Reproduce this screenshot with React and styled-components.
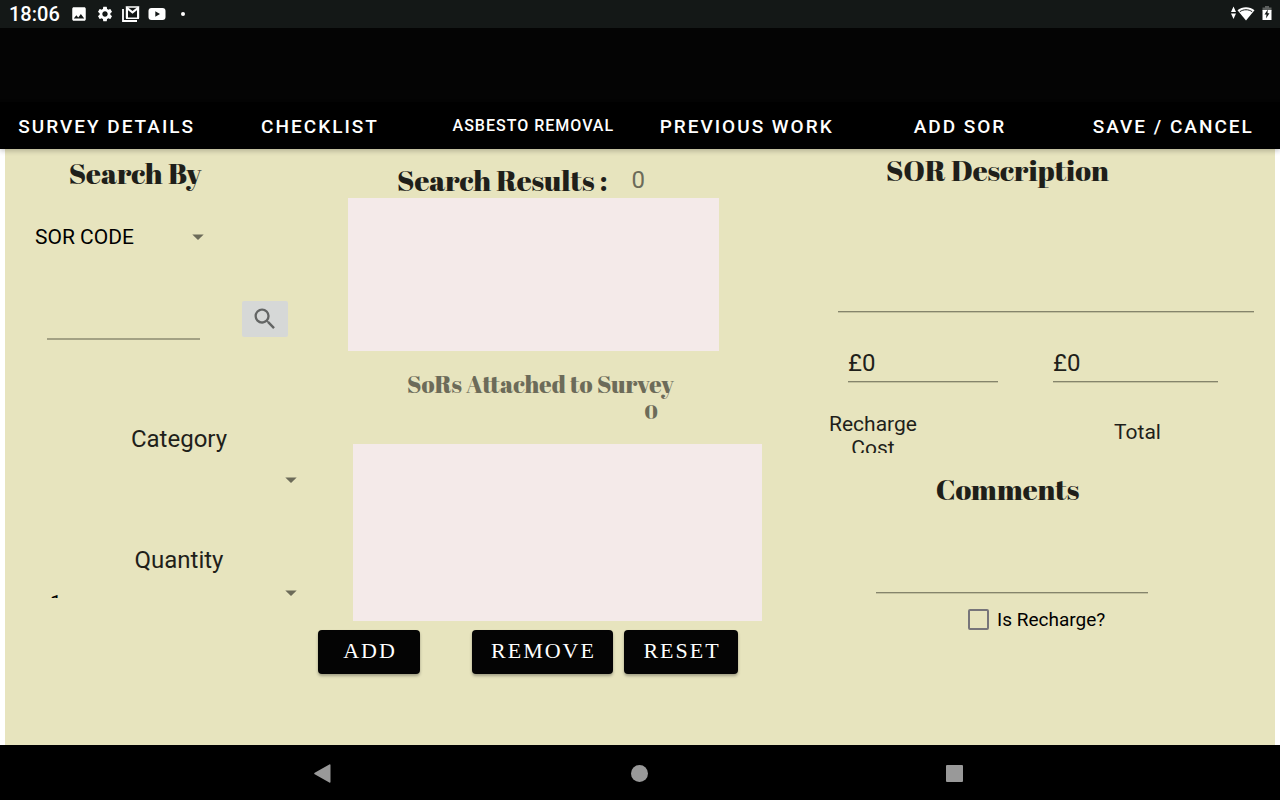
import React from "react";
import styled, { createGlobalStyle } from "styled-components";
import { MdImage, MdSettings, MdSearch } from "react-icons/md";

const GlobalStyle = createGlobalStyle`
  *, *::before, *::after { box-sizing: border-box; }
  body { margin: 0; background: #fff; font-family: Roboto, "Liberation Sans", sans-serif; color: #1f1f1a; }
  button, input, select, textarea { font: inherit; color: inherit; margin: 0; }
`;

const Screen = styled.div`
  min-height: 100vh;
  display: flex;
  flex-direction: column;
`;

const StatusBar = styled.header`
  height: 28px;
  padding: 0 8px 0 9px;
  background: #141817;
  color: #fff;
  display: flex;
  align-items: center;
  justify-content: space-between;
`;

const StatusGroup = styled.div`
  display: flex;
  align-items: center;
  gap: ${(p) => p.$gap}px;
  svg { display: block; }
`;

const Clock = styled.time`
  font-size: 20px;
  line-height: 28px;
  font-weight: 500;
  margin-right: 2px;
`;

const AppBar = styled.div`
  height: 74px;
  background: #040404;
`;

const Tabs = styled.nav`
  height: 47px;
  display: flex;
  background: #000;
  position: relative;
  z-index: 1;
  box-shadow: 0 2px 5px rgba(0, 0, 0, 0.22);
`;

const Tab = styled.button`
  flex: 1 1 0;
  min-width: 0;
  padding: ${(p) => (p.$small ? 0 : 2)}px 0 0;
  border: 0;
  background: none;
  color: #fff;
  font-size: ${(p) => (p.$small ? 16 : 19)}px;
  letter-spacing: ${(p) => (p.$small ? 1 : 2)}px;
  font-weight: 500;
  white-space: nowrap;
`;

const Content = styled.main`
  flex: 1;
  margin: 0 5px;
  background: #e7e4be;
  display: grid;
  grid-template-columns: 308fr 499fr 463fr;
`;

const Column = styled.section`
  min-width: 0;
  padding-top: ${(p) => p.$top}px;
`;

const Heading = styled.h2`
  margin: 0 ${(p) => p.$inset || 0}px 0 0;
  font-family: "Abril Fatface", "Liberation Serif", serif;
  font-size: 29px;
  line-height: 36px;
  font-weight: 400;
  text-align: center;
  white-space: nowrap;
`;

const SelectFrame = styled.div`
  display: grid;
  grid-template-rows: 100%;
  align-items: center;
  height: ${(p) => p.$height || 40}px;
  select, svg { grid-area: 1 / 1; }
  svg { justify-self: end; pointer-events: none; }
`;

const Select = styled.select`
  appearance: none;
  align-self: start;
  width: 100%;
  height: ${(p) => (p.$low ? 41 : 40)}px;
  border: 0;
  padding: ${(p) => (p.$low ? 17 : 0)}px 24px 0 ${(p) => p.$pad || 0}px;
  background: transparent;
  color: #000;
  font-size: 21px;
`;

const CodeBlock = styled.div`
  margin: 26px 103px 0 30px;
`;

const SearchRow = styled.div`
  margin: 44px 25px 0 42px;
  display: flex;
  align-items: flex-start;
  justify-content: space-between;
`;

const LineInput = styled.input`
  display: block;
  width: 100%;
  min-width: 0;
  height: 39px;
  padding: 1px 0 0;
  border: 0;
  border-bottom: 1px solid #85846c;
  border-radius: 0;
  box-shadow: 0 1px 0 #c4c29f;
  background: transparent;
  font-size: 24px;
`;

const SearchField = styled(LineInput)`
  flex: 0 1 153px;
  border-bottom: 2px solid #a3a184;
  box-shadow: none;
`;

const SearchButton = styled.button`
  width: 46px;
  height: 36px;
  padding: 0;
  border: 0;
  border-radius: 2px;
  background: #d6d8d7;
  color: #636564;
  display: grid;
  place-items: center;
`;

const Picker = styled.div`
  margin: ${(p) => p.$top}px 0 0 40px;
`;

const PickerLabel = styled.label`
  display: block;
  font-size: 24px;
  line-height: 28px;
  text-align: center;
`;

const PickerBody = styled.div`
  margin: ${(p) => (p.$clip ? 0 : 7)}px 10px 0 0;
  height: ${(p) => (p.$clip ? 24 : 40)}px;
  overflow: hidden;
`;

const ResultsHead = styled.div`
  display: flex;
  gap: 24px;
  padding-left: 84px;
`;

const Count = styled.output`
  color: #6c6b59;
  font-size: 24px;
  line-height: 36px;
`;

const List = styled.div`
  height: ${(p) => p.$height}px;
  margin: 0 ${(p) => p.$right}px 0 ${(p) => p.$left}px;
  background: #f4eae9;
`;

const Attached = styled.h3`
  width: fit-content;
  margin: 20px 0 19px 94px;
  font-family: "Abril Fatface", "Liberation Serif", serif;
  font-size: 24px;
  line-height: 27px;
  font-weight: 400;
  color: #6c6b59;
  white-space: nowrap;
  output { display: block; font-size: 20px; text-align: right; padding-right: 16px; }
`;

const Actions = styled.div`
  display: flex;
  margin: 9px 0 0 5px;
`;

const Action = styled.button`
  height: 44px;
  width: ${(p) => p.$width}px;
  margin-right: ${(p) => p.$after || 0}px;
  padding: 0 0 2px 2px;
  border: 0;
  border-radius: 4px;
  background: #040404;
  color: #fff;
  font-family: "Liberation Serif", serif;
  font-size: 22px;
  letter-spacing: 2px;
  box-shadow: 0 2px 3px rgba(0, 0, 0, 0.3);
`;

const TextArea = styled.textarea`
  display: block;
  resize: none;
  width: 100%;
  height: ${(p) => p.$height}px;
  padding: 0;
  border: 0;
  border-bottom: 1px solid #85846c;
  box-shadow: 0 1px 0 #c4c29f;
  background: transparent;
  font-size: 21px;
`;

const AreaBox = styled.div`
  margin: ${(p) => p.$margin};
`;

const Costs = styled.div`
  display: grid;
  grid-template-columns: 150fr 165fr;
  gap: 55px;
  margin: 31px 57px 0 36px;
`;

const CostLabels = styled.div`
  display: grid;
  grid-template-columns: 122px 1fr;
  grid-template-rows: 40px;
  gap: 66px;
  height: 41px;
  margin: 30px 0 18px;
  overflow: hidden;
`;

const CostLabel = styled.label`
  font-size: 21px;
  line-height: 24px;
  text-align: center;
  align-self: ${(p) => (p.$center ? "center" : "start")};
`;

const Recharge = styled.label`
  display: flex;
  align-items: center;
  gap: 8px;
  height: 30px;
  margin: 11px 0 0 156px;
  font-size: 19px;
  color: #000;
`;

const CheckBox = styled.input`
  appearance: none;
  width: 21px;
  height: 21px;
  border: 2px solid #77757a;
  border-radius: 2px;
  &:checked { background: #77757a; }
`;

const NavBar = styled.footer`
  height: 55px;
  background: #000;
  display: flex;
  justify-content: center;
`;

const NavKeys = styled.div`
  width: 74%;
  display: grid;
  grid-template-columns: repeat(3, 1fr);
  place-items: center;
`;

const NavKey = styled.button`
  border: 0;
  padding: 8px;
  background: none;
  svg { display: block; }
`;

const Caret = () => (
  <svg width="24" height="24" viewBox="0 0 24 24" fill="#6c6b59" aria-hidden="true">
    <path d="M6.3 9.4h11.4L12 15z" />
  </svg>
);

const MailIcon = () => (
  <svg width="18" height="16" viewBox="0 0 18 16" fill="none" stroke="#fff" aria-hidden="true">
    <path d="M1 3v12h14" strokeWidth="1.8" />
    <path d="M4.9 12.2V2l5.6 4.4L16.1 2v10.2" strokeWidth="2.2" />
    <path d="M4 12.3h13M5 1h11" strokeWidth="1.4" />
  </svg>
);

const VideoIcon = () => (
  <svg width="18" height="14" viewBox="0 0 18 14" aria-hidden="true">
    <rect x="0.5" y="1" width="17" height="12" rx="3" fill="#fff" />
    <path d="M7.3 4.3v5.4L12 7z" fill="#141817" />
  </svg>
);

const DotIcon = () => (
  <svg width="18" height="6" viewBox="0 0 18 6" aria-hidden="true">
    <circle cx="9" cy="3" r="2" fill="#fff" />
  </svg>
);

const SignalIcon = () => (
  <svg width="24" height="16" viewBox="0 0 24 16" fill="#fff" aria-hidden="true">
    <path d="M0 6 2.5 .5 5 6zM0 7.5h5L2.5 13z" />
    <path d="M6.5 4.3C11 .1 19 .1 23.500 4.300L15 14.500z" />
    <path d="M8.800 5.700C12.500 3.100 17.500 3.100 21.200 5.700" fill="none" stroke="#141817" strokeWidth="1" />
  </svg>
);

const BatteryIcon = () => (
  <svg width="10" height="16" viewBox="0 0 10 16" aria-hidden="true">
    <path d="M3 0h4v1.500h2.500V5h-9V1.500H3z" fill="#5d605f" />
    <path d="M.5 4h9v10h-9z" fill="#fff" />
    <path d="M5.800 3.500 2.500 8.500h2L4 12.500l3.500-5.300H5.500z" fill="#141817" />
  </svg>
);

const TABS = [
  "SURVEY DETAILS",
  "CHECKLIST",
  "ASBESTO REMOVAL",
  "PREVIOUS WORK",
  "ADD SOR",
  "SAVE / CANCEL",
];

export default function App() {
  return (
    <Screen>
      <GlobalStyle />
      <StatusBar>
        <StatusGroup $gap={8}>
          <Clock>18:06</Clock>
          <MdImage size={18} />
          <MdSettings size={18} />
          <MailIcon />
          <VideoIcon />
          <DotIcon />
        </StatusGroup>
        <StatusGroup $gap={7}>
          <SignalIcon />
          <BatteryIcon />
        </StatusGroup>
      </StatusBar>
      <AppBar />
      <Tabs>
        {TABS.map((name) => (
          <Tab key={name} type="button" $small={name.startsWith("ASBESTO")}>
            {name}
          </Tab>
        ))}
      </Tabs>

      <Content>
        <Column $top={6}>
          <Heading $inset={48}>Search By</Heading>
          <CodeBlock>
            <SelectFrame>
              <Select aria-label="Search by" defaultValue="SOR CODE">
                <option>SOR CODE</option>
              </Select>
              <Caret />
            </SelectFrame>
          </CodeBlock>
          <SearchRow>
            <SearchField type="text" aria-label="Search text" />
            <SearchButton type="button" aria-label="Search">
              <MdSearch size={28} />
            </SearchButton>
          </SearchRow>

          <Picker $top={85}>
            <PickerLabel htmlFor="category">Category</PickerLabel>
            <PickerBody>
              <SelectFrame>
                <Select id="category" $pad={5}>
                  <option value="" aria-label="None" />
                </Select>
                <Caret />
              </SelectFrame>
            </PickerBody>
          </Picker>
          <Picker $top={46}>
            <PickerLabel htmlFor="quantity">Quantity</PickerLabel>
            <PickerBody $clip>
              <SelectFrame $height={38}>
                <Select id="quantity" $pad={5} $low>
                  <option>1</option>
                </Select>
                <Caret />
              </SelectFrame>
            </PickerBody>
          </Picker>
        </Column>

        <Column $top={13}>
          <ResultsHead>
            <Heading>Search Results :</Heading>
            <Count>0</Count>
          </ResultsHead>
          <List $height={153} $left={35} $right={93} />
          <Attached>
            SoRs Attached to Survey
            <output>0</output>
          </Attached>
          <List $height={177} $left={40} $right={50} />
          <Actions>
            <Action type="button" $width={102} $after={52}>ADD</Action>
            <Action type="button" $width={141} $after={11}>REMOVE</Action>
            <Action type="button" $width={114}>RESET</Action>
          </Actions>
        </Column>

        <Column $top={3}>
          <Heading $inset={92}>SOR Description</Heading>
          <AreaBox $margin="20px 21px 0 26px">
            <TextArea $height={104} aria-label="SOR Description" />
          </AreaBox>
          <Costs>
            <LineInput id="recharge-cost" type="text" defaultValue="£0" />
            <LineInput id="total" type="text" defaultValue="£0" />
          </Costs>
          <CostLabels>
            <CostLabel htmlFor="recharge-cost">Recharge Cost</CostLabel>
            <CostLabel htmlFor="total" $center>Total</CostLabel>
          </CostLabels>
          <Heading $inset={72}>Comments</Heading>
          <AreaBox $margin="0 127px 0 64px">
            <TextArea $height={86} aria-label="Comments" />
          </AreaBox>
          <Recharge>
            <CheckBox type="checkbox" />
            Is Recharge?
          </Recharge>
        </Column>
      </Content>

      <NavBar>
        <NavKeys>
          <NavKey type="button" aria-label="Back">
            <svg width="20" height="20" viewBox="0 0 20 20" fill="#999">
              <path d="M16.500 2v17a.8.8 0 0 1-1.200.6L.700 11.300a1 1 0 0 1 0-1.600L15.300 1.400A.8.8 0 0 1 16.500 2z" />
            </svg>
          </NavKey>
          <NavKey type="button" aria-label="Home">
            <svg width="20" height="20" viewBox="0 0 20 20" fill="#999">
              <circle cx="9.500" cy="10.500" r="8.500" />
            </svg>
          </NavKey>
          <NavKey type="button" aria-label="Recent apps">
            <svg width="20" height="20" viewBox="0 0 20 20" fill="#999">
              <rect x="0" y="2" width="17" height="17" rx="1" />
            </svg>
          </NavKey>
        </NavKeys>
      </NavBar>
    </Screen>
  );
}
